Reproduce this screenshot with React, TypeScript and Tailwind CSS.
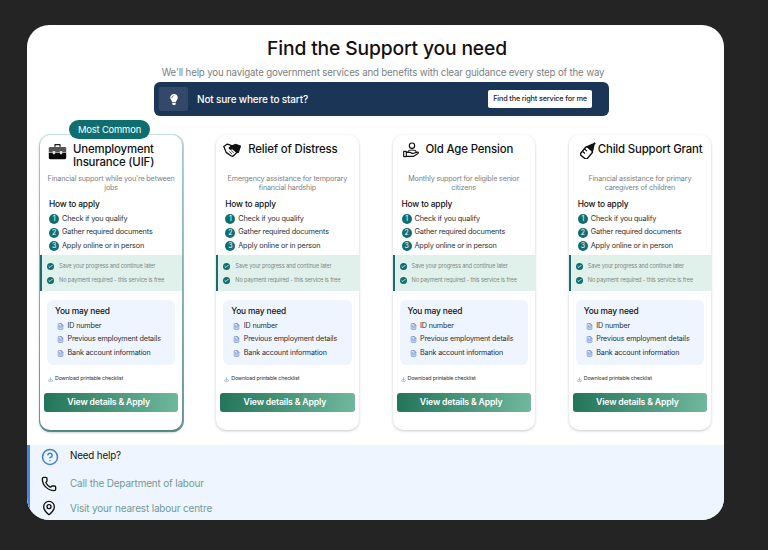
import type { ReactNode } from "react";
import { CircleHelp, Phone, MapPin, FileText, Download, Check } from "lucide-react";
import { FaLightbulb } from "react-icons/fa";

function Briefcase() {
  return (
    <svg viewBox="0 0 24 24" className="w-[19px] h-[19px] shrink-0">
      <path d="M8 6V3.600C8 3 8.400 2.600 9 2.600h6c.6 0 1 .4 1 1V6h-1.600V4.200H9.600V6z" fill="#1a1a1a" />
      <path d="M1 8c0-1 .8-1.800 1.800-1.800h18.400C22.200 6.200 23 7 23 8v5H1z" fill="#555" />
      <path d="M1 13.500h22V20c0 1-.8 1.800-1.800 1.800H2.800C1.800 21.800 1 21 1 20z" fill="#050505" />
      <rect x="6" y="11.500" width="3" height="4" rx=".6" fill="#ddd" />
      <rect x="15" y="11.500" width="3" height="4" rx=".6" fill="#ddd" />
    </svg>
  );
}
function Handshake() {
  return (
    <svg viewBox="0 0 24 20" className="w-[19px] h-[16px] shrink-0">
      <path d="M1 5.500 5.500 2.500 11 4.500 8 7.500c1 1.500 2.500 1.500 4 .5l5.500 5-4.500 4.500c-1.200.6-2.500.3-3.500-.5L4 13z" fill="none" stroke="#111" strokeWidth="1.700" strokeLinejoin="round" />
      <path d="M11 4 16 2l7 2.500-3 9-2 .5-6-5.500-3 1-1.500-2z" fill="#111" />
      <path d="M8 12l3.500 3M10 10.500l3.500 3" stroke="#111" strokeWidth="1" />
    </svg>
  );
}
function Pension() {
  return (
    <svg viewBox="0 0 24 24" className="w-[16px] h-[16px] shrink-0" fill="none" stroke="#111" strokeWidth="1.700" strokeLinejoin="round" strokeLinecap="round">
      <circle cx="13.500" cy="5.500" r="4" />
      <path d="M7.500 15c0-2 2-3 6-3s6 1 6 2.500" />
      <rect x="1" y="14" width="4" height="8" rx=".5" />
      <path d="M5 15.500h5c1.500 0 2.500.5 3 1.500h3l5.500-1.800c1.500-.3 2 1.200 1 2L16 21.500H5" />
    </svg>
  );
}
function Bottle() {
  return (
    <svg viewBox="0 0 24 24" className="w-[17px] h-[17px] shrink-0" fill="none" stroke="#111" strokeWidth="2" strokeLinejoin="round">
      <g transform="rotate(40 12 12)">
        <rect x="6" y="9" width="12" height="15" rx="2.500" />
        <path d="M7.500 9C7.500 6 10 5 10.500 2h3c.5 3 3 4 3 7z" fill="#111" />
        <rect x="10.800" y="-2" width="2.400" height="4.500" rx="1.200" fill="#111" strokeWidth="1" />
        <path d="M6 14h5M6 18.500h5" strokeWidth="1.800" />
      </g>
    </svg>
  );
}

const cards = [
  { title: "Unemployment Insurance (UIF)", desc: "Financial support while you're between jobs", icon: <Briefcase />, common: true, head: "pl-[8px] gap-[6px]" },
  { title: "Relief of Distress", desc: "Emergency assistance for temporary financial hardship", icon: <Handshake />, head: "pl-[7px] gap-[6px]" },
  { title: "Old Age Pension", desc: "Monthly support for eligible senior citizens", icon: <Pension />, head: "pl-[10px] gap-[7px]" },
  { title: "Child Support Grant", desc: "Financial assistance for primary caregivers of children", icon: <Bottle />, head: "pl-[11px] gap-[1px]" },
];

function Card({ title, desc, icon, common, head }: { title: string; desc: string; icon: ReactNode; common?: boolean; head: string }) {
  return (
    <div
      className={
        "relative h-[295px] flex flex-col rounded-[10px] bg-white " +
        (common ? "shadow-[0_2px_3px_rgba(50,100,100,0.55)]" : "shadow-[0_1px_3px_rgba(0,0,0,0.22)]")
      }
    >
      {common && (
        <>
          <div className="absolute -inset-[1.500px] rounded-[11.500px] bg-gradient-to-b from-[#c8e2df] to-[#6f9f9c] -z-10" />
          <div className="absolute -top-[15px] left-[29px] h-[19px] w-[81px] rounded-full bg-[#0f6f70] text-white text-[9.400px] leading-[19px] text-center">
            Most Common
          </div>
        </>
      )}
      <div className={"flex items-start h-[35px] pt-[7px] " + head}>
        <div className="shrink-0">{icon}</div>
        <div className="text-[11.400px] leading-[13px] font-medium text-[#111] mt-[1px]">{title}</div>
      </div>
      <p className="mt-[5px] text-[7.200px] leading-[8.500px] text-center text-[#7c7f83] px-[6px]">{desc}</p>
      <div className="px-[9px] mt-[6px]">
        <div className="text-[8.400px] font-medium leading-[12px] text-[#111]">How to apply</div>
        <div className="mt-[4px] flex flex-col gap-[3.500px]">
          {["Check if you qualify", "Gather required documents", "Apply online or in person"].map((s, i) => (
            <div key={s} className="flex items-center gap-[3px] h-[10px]">
              <span className="w-[10px] h-[10px] rounded-full bg-[#0f6f70] text-white text-[7px] leading-[10px] text-center shrink-0">{i + 1}</span>
              <span className="text-[7.300px] text-[#2b2f33]">{s}</span>
            </div>
          ))}
        </div>
      </div>
      <div className="mt-[4px] h-[36px] bg-[#dff1ea] border-l-2 border-[#1b6b6c] flex flex-col justify-center gap-[6px] pl-[5px]">
        {["Save your progress and continue later", "No payment required - this service is free"].map((s) => (
          <div key={s} className="flex items-center gap-[5px] h-[8px]">
            <span className="w-[7px] h-[7px] rounded-full bg-[#0f6f70] flex items-center justify-center shrink-0">
              <Check className="w-[5px] h-[5px] text-white" strokeWidth={4} />
            </span>
            <span className="text-[5.700px] text-[#7d8a87]">{s}</span>
          </div>
        ))}
      </div>
      <div className="mx-[7px] mt-[9px] h-[65px] rounded-[6px] bg-[#eff5fe] px-[8px] pt-[5px]">
        <div className="text-[8.400px] font-medium leading-[12px] text-[#111]">You may need</div>
        <div className="mt-[4px] pl-[2px] flex flex-col gap-[3.500px]">
          {["ID number", "Previous employment details", "Bank account information"].map((s) => (
            <div key={s} className="flex items-center gap-[3.500px] h-[10px]">
              <FileText className="w-[7px] h-[9px] text-[#4a6fc0] shrink-0" />
              <span className="text-[7.200px] text-[#2b2f33] whitespace-nowrap">{s}</span>
            </div>
          ))}
        </div>
      </div>
      <div className="mx-[8px] mt-[10px] flex items-center gap-[2px] h-[8px]">
        <Download className="w-[5px] h-[5px] text-[#4a6fc0]" />
        <span className="text-[5.300px] text-[#2b2f33]">Download printable checklist</span>
      </div>
      <div className="mx-[4px] mt-[10px] h-[19px] pr-[5px] rounded-[3px] bg-gradient-to-r from-[#22755a] to-[#6fb89d] text-white text-[8.700px] font-semibold leading-[19px] text-center">
        View details &amp; Apply
      </div>
    </div>
  );
}

export default function App() {
  return (
    <div className="w-[768px] h-[550px] bg-[#242424] pt-[25px] pl-[27px] tracking-[-0.01em]" style={{ fontFamily: "Inter, 'Liberation Sans', sans-serif" }}>
      <div className="w-[697px] h-[495px] bg-white rounded-[22px] overflow-hidden flex flex-col">
        <h1 className="mt-[10px] pl-[23px] text-[19.300px] leading-[27px] font-medium text-center text-[#111]">Find the Support you need</h1>
        <p className="mt-[4px] pl-[15px] text-[9.700px] leading-[14px] text-center text-[#7c7f83]">
          We'll help you navigate government services and benefits with clear guidance every step of the way
        </p>
        <div className="mt-[2px] ml-[127px] w-[455px] h-[34px] rounded-[6px] bg-[#1b3556] flex items-center pl-[5px] pr-[17px]">
          <div className="w-[29px] h-[24px] rounded-[2px] bg-[#34496a] flex items-center justify-center">
            <FaLightbulb className="w-[10px] h-[11px] text-white" />
          </div>
          <span className="ml-[9px] text-[10px] font-medium text-white">Not sure where to start?</span>
          <div className="ml-auto w-[104px] h-[18px] rounded-[2px] bg-white text-[#24282c] text-[7.300px] font-medium leading-[18px] text-center">
            Find the right service for me
          </div>
        </div>
        <div className="isolate mt-[19px] mx-[13px] grid grid-cols-4 gap-[34px]">
          {cards.map((c) => (
            <Card key={c.title} {...c} />
          ))}
        </div>
        <div className="mt-auto h-[75px] bg-[#eff5fe] border-l-[3px] border-[#4a86e8] pl-[11px]">
          <div className="flex items-center h-[22px] mt-[1px]">
            <CircleHelp className="w-[18px] h-[18px] text-[#3f7fdc]" />
            <span className="ml-[11px] -mt-[2px] text-[9.800px] text-[#111]">Need help?</span>
          </div>
          <div className="flex items-center h-[25px] mt-[3px]">
            <Phone className="w-[16px] h-[16px] text-[#111]" />
            <span className="ml-[13px] text-[9.950px] text-[#6f9a94]">Call the Department of labour</span>
          </div>
          <div className="flex items-center h-[24px]">
            <MapPin className="w-[16px] h-[16px] text-[#111]" />
            <span className="ml-[13px] text-[9.950px] text-[#6f9a94]">Visit your nearest labour centre</span>
          </div>
        </div>
      </div>
    </div>
  );
}
